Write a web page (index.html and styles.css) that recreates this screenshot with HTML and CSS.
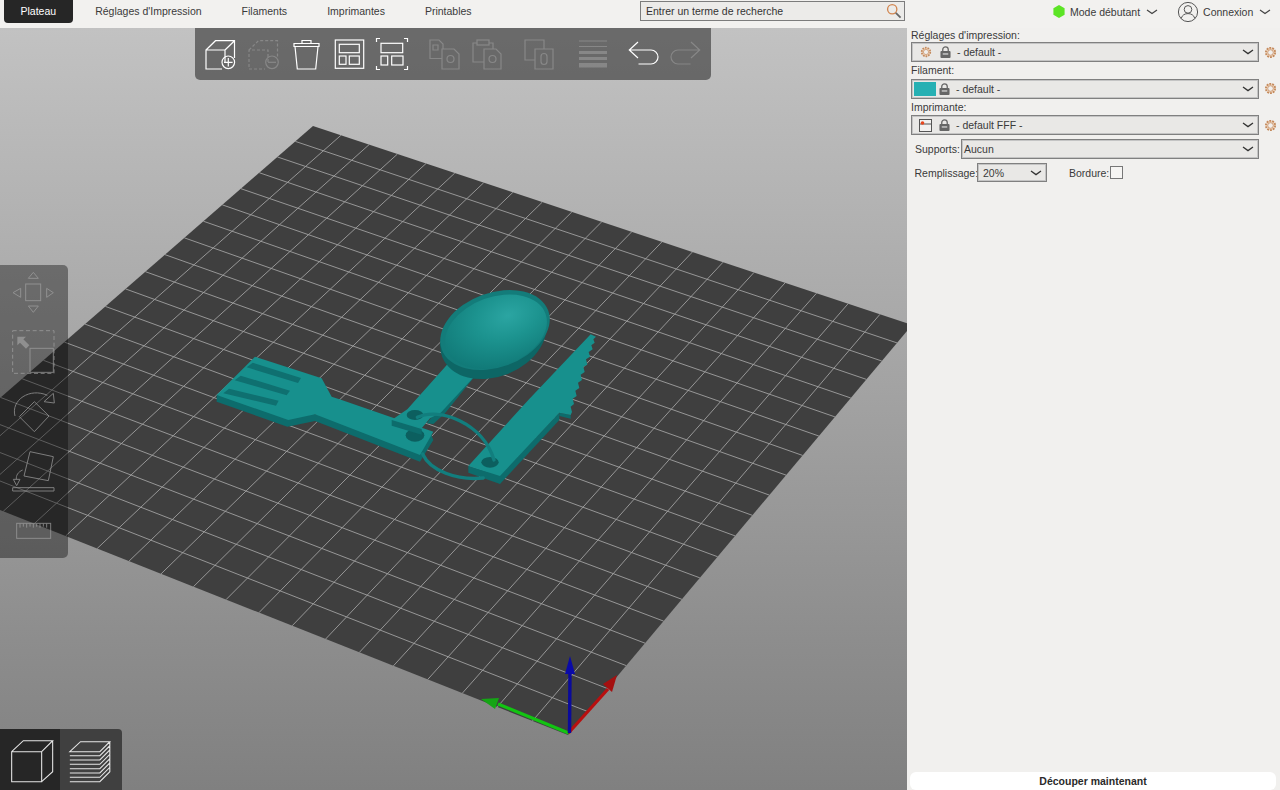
FILE: index.html
```html
<!DOCTYPE html>
<html lang="fr">
<head>
<meta charset="utf-8">
<title>Plateau</title>
<link rel="stylesheet" href="styles.css">
</head>
<body>
<header class="topbar">
  <nav class="tabs">
    <span class="tab active">Plateau</span>
    <span class="tab">Réglages d'Impression</span>
    <span class="tab">Filaments</span>
    <span class="tab">Imprimantes</span>
    <span class="tab">Printables</span>
  </nav>
  <div class="search">
    <span>Entrer un terme de recherche</span>
    <svg class="search-icon" viewBox="0 0 18 18"><circle cx="7" cy="7" r="5.2" fill="none" stroke="#d2854f" stroke-width="1.5"/><path d="M11 11l5.4 5.4" stroke="#666" stroke-width="2"/></svg>
  </div>
  <div class="mode">
    <svg class="hex" viewBox="0 0 12 13"><path d="M6 0l5.6 3.2v6.6L6 13 .4 9.8V3.2z" fill="#5ce425"/></svg>
    <span>Mode débutant</span>
    <svg class="chev-top" viewBox="0 0 12 6"><path d="M1 1l5 3.6L11 1" fill="none" stroke="#444" stroke-width="1.2"/></svg>
  </div>
  <div class="account">
    <svg class="user" viewBox="0 0 22 22"><circle cx="11" cy="11" r="9.6" fill="none" stroke="#555" stroke-width="1"/><circle cx="11" cy="8.4" r="3.8" fill="none" stroke="#555" stroke-width="1"/><path d="M4.2 17.4c1-3.4 3.6-4.8 6.8-4.8s5.8 1.4 6.8 4.8" fill="none" stroke="#555" stroke-width="1"/></svg>
    <span>Connexion</span>
    <svg class="chev-top" viewBox="0 0 12 6"><path d="M1 1l5 3.6L11 1" fill="none" stroke="#444" stroke-width="1.2"/></svg>
  </div>
</header>

<main class="workspace">
  <section class="viewport">
    <svg class="scene" viewBox="0 28 907 762">
      <defs>
        <radialGradient id="bowl" cx=".66" cy=".34" r=".72">
          <stop offset="0" stop-color="#2ba5a2"/>
          <stop offset=".45" stop-color="#1c938f"/>
          <stop offset="1" stop-color="#117a78"/>
        </radialGradient>
      </defs>
      <polygon class="bed" points="313,126 912,325 568,735 -88.5,475"/>
      <g id="grid" class="grid"></g>

      <g transform="translate(200 280) scale(.33333)">
        <!-- fork -->
        <polygon class="m-side" points="50,345 50,365 262,440 345,423 660,545 700,480 690,455 345,403"/>
        <polygon class="m-top" points="165,230 365,295 395,350 425,360 700,455 660,525 345,403 265,420 50,345"/>
        <polygon class="m-slot" points="158,248 303,294 294,309 140,262"/>
        <polygon class="m-slot" points="122,287 270,332 260,346 104,301"/>
        <polygon class="m-slot" points="87,326 236,362 228,377 70,340"/>
        <ellipse class="m-hole" cx="645" cy="466" rx="28" ry="19"/>
        <!-- spoon -->
        <polygon class="m-side" points="830,282 735,400 700,432 680,430 810,270"/>
        <polygon class="m-top" points="745,250 830,282 722,398 690,415 665,445 575,420 622,388"/>
        <polygon class="m-side" points="575,420 665,447 665,464 575,437"/>
        <ellipse class="m-hole" cx="645" cy="405" rx="25" ry="15"/>
        <ellipse cx="880" cy="170" rx="165" ry="120" transform="rotate(-22 880 170)" fill="#0d6665"/>
        <ellipse cx="885" cy="150" rx="170" ry="112" transform="rotate(-20 885 150)" fill="#137c7a"/>
        <ellipse cx="888" cy="155" rx="158" ry="104" transform="rotate(-20 888 155)" fill="url(#bowl)"/>
        <!-- knife -->
        <polygon class="m-side" points="895,592 900,612 1078,420 1078,398 900,585"/>
        <polygon class="m-side" points="805,558 805,578 900,612 900,585"/>
        <polygon class="m-side" points="1078,398 1078,408 1112,416 1112,405"/>
        <polygon class="m-top" points="1172,163 1188,170 1180,178 1184,188 1174,196 1178,208 1166,216 1170,230 1158,238 1162,254 1150,260 1154,276 1142,284 1146,300 1134,308 1138,324 1126,332 1130,348 1118,356 1122,372 1112,380 1116,396 1112,405 1078,398 900,588 805,558 985,360"/>
        <ellipse class="m-hole" cx="870" cy="547" rx="26" ry="16"/>
        <!-- ring -->
        <path class="m-ring" d="M652 412C720 380 850 430 882 540"/>
        <path class="m-ring" d="M668 522C690 572 770 602 850 594"/>
      </g>

      <!-- axes -->
      <path d="M568.5 733L498 704" stroke="#12c412" stroke-width="3.2"/>
      <polygon points="481,699 499,698 495,709" fill="#15a515"/>
      <path d="M568.5 733L608 689" stroke="#b80f0f" stroke-width="3.2"/>
      <polygon points="617,675 612,692 603,684" fill="#a51010"/>
      <path d="M569.5 733L570 672" stroke="#0a0a9c" stroke-width="3.4"/>
      <polygon points="570,656 575,674 565,674" fill="#0a0aa8"/>
    </svg>

    <div class="toolbar">
      <svg class="tool" viewBox="0 0 32 32"><path d="M21 24.5V12H2v19h16M2 12l9.5-9.3h19v17.3M21 12l9.5-9.3"/><circle cx="24.3" cy="24.3" r="6.3"/><path d="M24.3 20v8.6M20 24.3h8.6"/></svg>
      <svg class="tool faint" viewBox="0 0 32 32"><path class="dash" d="M21 24V12H2v19h16M2 12l9.5-9.3h19v17"/><circle cx="25" cy="24.3" r="6.3"/><path d="M21 24.3h8"/></svg>
      <svg class="tool" viewBox="0 0 32 32"><path d="M4 5.5h25v3H4zM12 5.5V2.500h9v3M5 8.500L7.300 31h18.400L28 8.500"/></svg>
      <svg class="tool" viewBox="0 0 32 32"><rect x="2.3" y="2" width="28.4" height="28.3"/><rect x="6.3" y="6.3" width="20" height="8.4"/><rect x="6.3" y="18" width="6.7" height="8.3"/><rect x="16.3" y="18" width="10" height="8.3"/></svg>
      <svg class="tool" viewBox="0 0 32 32"><path d="M.5 4V.5h3.500M28 .5h3.500V4M.5 28v3.500h3.500M28 31.500h3.500V28"/><rect x="5" y="5.3" width="21.7" height="9.4"/><rect x="5" y="18" width="6.7" height="9"/><rect x="15.7" y="18" width="11.3" height="9"/></svg>
      <svg class="tool faint sep" viewBox="0 0 32 32"><path d="M14 20.5H2V2h9l4 4v5M5 7h5v5H5z"/><path d="M14 11h12l5 5v15H14z"/><circle cx="22.5" cy="21" r="3.5"/></svg>
      <svg class="tool faint" viewBox="0 0 32 32"><path d="M13 24H2V5h4M18 5h4v6"/><rect x="6" y="2" width="12" height="5"/><path d="M13 11h12l5 5v15H13z"/><circle cx="21.5" cy="21" r="3.5"/></svg>
      <svg class="tool faint sep" viewBox="0 0 32 32"><path d="M12 22H2V2h19v9"/><path d="M12 11h18v20H12z"/><rect x="18" y="15.5" width="6" height="11" rx="3"/></svg>
      <svg class="tool faint sep-wide" viewBox="0 0 32 32"><path d="M3 3h28M3 8.5h28"/><rect class="fill" x="3" y="13" width="28" height="3"/><rect class="fill" x="3" y="19" width="28" height="3"/><rect class="fill" x="3" y="25" width="28" height="4.5"/></svg>
      <svg class="tool sep-narrow" viewBox="0 0 32 32"><path d="M2.3 12H24A7 7 0 0 1 24 26H11.500M11 4L2.300 12 11 20"/></svg>
      <svg class="tool faint" viewBox="0 0 32 32"><path d="M29.7 12H8A7 7 0 0 0 8 26H20.500M21 4L29.700 12 21 20"/></svg>
    </div>

    <div class="gizmos">
      <svg class="gizmo g46" viewBox="0 30 204 138"><rect x="77" y="72" width="45" height="50"/><path d="M85 55h30L100 37zM62 85v27L39 98zM140 85v27l20-14zM85 138h30l-15 19z"/></svg>
      <svg class="gizmo g50" viewBox="0 201 204 150"><path class="dash2" d="M38 212h124v128H38z"/><rect x="90" y="265" width="70" height="72"/><path class="solidfill" d="M52 230h26l-8 8 18 18-10 10-18-18-8 8z"/></svg>
      <svg class="gizmo g49" viewBox="0 384 204 147"><path d="M45 468C32 420 90 382 142 406"/><path d="M160 400l-28 25 31 4zM103 425l44 43-44 47-45-45z"/></svg>
      <svg class="gizmo g50" viewBox="0 564 204 150"><path d="M90 575l70 15-15 72-73-14zM38 683h124v10H38zM68 630c-14 6-20 16-19 28"/><path d="M40 658h20l-10 19z"/></svg>
      <svg class="gizmo g36" viewBox="0 747 204 108"><rect x="50" y="790" width="102" height="45"/><path d="M60 790v13M70 790v10M80 790v13M90 790v10M100 790v13M110 790v10M120 790v13M130 790v10M140 790v13"/></svg>
    </div>

    <div class="views">
      <div class="view view-active">
        <svg viewBox="0 237 180 183"><path d="M35 305h90v90H35zM35 305l35-33h88l-33 33M158 272v93l-33 30"/></svg>
      </div>
      <div class="view">
        <svg viewBox="180 237 183 183"><path d="M208 305l32-30h88l-30 30zM328 275v12l-30 30H208M328 287v13l-30 30H208M328 300v13l-30 30H208M328 313v13l-30 30H208M328 326v13l-30 30H208M328 339v13l-30 30H208M328 352v13l-30 30H208"/></svg>
      </div>
    </div>
  </section>

  <aside class="sidebar">
    <div class="field-label first">Réglages d'impression:</div>
    <div class="row">
      <div class="select">
        <svg class="gear small" viewBox="0 0 14 14"><circle cx="7" cy="7" r="5"/><circle cx="7" cy="7" r="3" class="gear-in"/></svg>
        <svg class="lock" viewBox="0 0 12 13"><path d="M3 6V3.8a3 3 0 016 0V6" fill="none" stroke="#666" stroke-width="1.4"/><rect x=".5" y="5.5" width="11" height="7.5" rx="1" fill="#666"/><rect x="3" y="8" width="6" height="1.3" fill="#ddd"/></svg>
        <span class="value">- default -</span>
        <svg class="chev" viewBox="0 0 12 6"><path d="M1 1l5 3.6L11 1" fill="none" stroke="#333" stroke-width="1.3"/></svg>
      </div>
      <svg class="gear" viewBox="0 0 14 14"><circle cx="7" cy="7" r="5"/><circle cx="7" cy="7" r="3" class="gear-in"/></svg>
    </div>
    <div class="field-label">Filament:</div>
    <div class="row">
      <div class="select swatched">
        <span class="swatch"></span>
        <svg class="lock" viewBox="0 0 12 13"><path d="M3 6V3.8a3 3 0 016 0V6" fill="none" stroke="#666" stroke-width="1.4"/><rect x=".5" y="5.5" width="11" height="7.5" rx="1" fill="#666"/><rect x="3" y="8" width="6" height="1.3" fill="#ddd"/></svg>
        <span class="value">- default -</span>
        <svg class="chev" viewBox="0 0 12 6"><path d="M1 1l5 3.6L11 1" fill="none" stroke="#333" stroke-width="1.3"/></svg>
      </div>
      <svg class="gear" viewBox="0 0 14 14"><circle cx="7" cy="7" r="5"/><circle cx="7" cy="7" r="3" class="gear-in"/></svg>
    </div>
    <div class="field-label">Imprimante:</div>
    <div class="row">
      <div class="select">
        <svg class="printer" viewBox="0 0 13 13"><rect x=".5" y=".5" width="12" height="12" fill="#f2f1ef" stroke="#555"/><path d="M.5 5h12" stroke="#555"/><circle cx="3.5" cy="4" r="1.8" fill="#e8451c"/></svg>
        <svg class="lock" viewBox="0 0 12 13"><path d="M3 6V3.8a3 3 0 016 0V6" fill="none" stroke="#666" stroke-width="1.4"/><rect x=".5" y="5.5" width="11" height="7.5" rx="1" fill="#666"/><rect x="3" y="8" width="6" height="1.3" fill="#ddd"/></svg>
        <span class="value">- default FFF -</span>
        <svg class="chev" viewBox="0 0 12 6"><path d="M1 1l5 3.6L11 1" fill="none" stroke="#333" stroke-width="1.3"/></svg>
      </div>
      <svg class="gear" viewBox="0 0 14 14"><circle cx="7" cy="7" r="5"/><circle cx="7" cy="7" r="3" class="gear-in"/></svg>
    </div>
    <div class="row supports">
      <span class="inline-label">Supports:</span>
      <div class="select plain">
        <span class="value">Aucun</span>
        <svg class="chev" viewBox="0 0 12 6"><path d="M1 1l5 3.6L11 1" fill="none" stroke="#333" stroke-width="1.3"/></svg>
      </div>
    </div>
    <div class="row infill">
      <span class="inline-label">Remplissage:</span>
      <div class="select plain short">
        <span class="value">20%</span>
        <svg class="chev" viewBox="0 0 12 6"><path d="M1 1l5 3.6L11 1" fill="none" stroke="#333" stroke-width="1.3"/></svg>
      </div>
      <span class="inline-label brim">Bordure:</span>
      <span class="checkbox"></span>
    </div>
    <button class="slice">Découper maintenant</button>
  </aside>
</main>
<script src="script.js"></script>
</body>
</html>
```
FILE: styles.css
```css
* { box-sizing: border-box; }
html, body { margin: 0; height: 100%; }
body {
  width: 1280px;
  height: 790px;
  overflow: hidden;
  display: flex;
  flex-direction: column;
  background: #f1f0ee;
  color: #3a3a3a;
  font-family: "Liberation Sans", Arial, sans-serif;
  font-size: 10.5px;
}

/* top bar */
.topbar {
  height: 28px;
  flex: none;
  display: flex;
  align-items: flex-start;
  background: #f2f1ef;
}
.tabs { display: flex; width: 491px; padding-left: 4px; flex: none; }
.tab {
  height: 23px;
  line-height: 23px;
  padding: 0 20px;
  white-space: nowrap;
  flex: none;
}
.tab.active {
  background: #262626;
  color: #fff;
  border-radius: 0 0 4px 4px;
  padding: 0 16.5px;
  margin-right: 2.5px;
}
.search {
  margin-left: 149px;
  margin-top: 1px;
  width: 265px;
  height: 20px;
  flex: none;
  display: flex;
  align-items: center;
  justify-content: space-between;
  padding: 0 2px 0 5px;
  background: #ecebe9;
  border: 1px solid #7c7c7c;
  color: #333;
}
.search-icon { width: 16px; height: 16px; }
.mode {
  display: flex;
  align-items: center;
  height: 23px;
  margin-left: 148px;
}
.hex { width: 12px; height: 13px; margin-right: 5px; }
.chev-top { width: 12px; height: 6px; margin-left: 6px; }
.account {
  display: flex;
  align-items: center;
  height: 23px;
  margin-left: 19px;
}
.user { width: 22px; height: 22px; margin-right: 4px; }

/* workspace */
.workspace { flex: 1; display: flex; min-height: 0; }
.viewport {
  position: relative;
  width: 907px;
  flex: none;
  overflow: hidden;
  background: linear-gradient(#c2c2c2, #808080);
}
.scene { position: absolute; inset: 0; width: 907px; height: 762px; filter: blur(.35px); }
.bed { fill: #3f3f3f; }
.grid line { stroke: #a0a0a0; stroke-width: .9; }
.m-top { fill: #17908d; }
.m-side { fill: #0d6c6c; }
.m-slot { fill: #0f7070; }
.m-hole { fill: #0c5f5f; }
.m-ring { fill: none; stroke: #127e7e; stroke-width: 10; stroke-linecap: round; }

.toolbar {
  position: absolute;
  left: 195px;
  top: 0;
  width: 516px;
  height: 52px;
  padding: 10px 0 0 9px;
  display: flex;
  gap: 11px;
  background: rgba(0, 0, 0, .45);
  border-radius: 0 0 5px 5px;
}
.tool { width: 32px; height: 32px; flex: none; fill: none; stroke: #fff; stroke-width: 1.2; overflow: visible; }
.tool.faint { opacity: .2; }
.tool .dash { stroke-dasharray: 3 2; }
.tool .fill { fill: #fff; stroke: none; }
.sep { margin-left: 9px; }
.sep-wide { margin-left: 10px; }
.sep-narrow { margin-left: 8px; }

.gizmos {
  position: absolute;
  left: 0;
  top: 237px;
  width: 68px;
  height: 293px;
  padding-top: 5px;
  display: flex;
  flex-direction: column;
  gap: 11px;
  background: rgba(0, 0, 0, .38);
  border-radius: 0 5px 5px 0;
}
.gizmo { width: 68px; flex: none; fill: none; stroke: #9f9f9f; stroke-width: 3; opacity: .72; }
.g46 { height: 46px; }
.g50 { height: 50px; }
.g49 { height: 49px; }
.g36 { height: 36px; }
.dash2 { stroke-dasharray: 12 8; }
.solidfill { fill: #9f9f9f; stroke: none; }

.views {
  position: absolute;
  left: 0;
  bottom: 0;
  display: flex;
}
.view { width: 62px; height: 61px; background: #404040; border-radius: 0 4px 0 0; }
.view-active { width: 60px; background: #262626; border-radius: 0; }
.view svg { display: block; width: 100%; height: 100%; fill: none; stroke: #e6e6e6; stroke-width: 3.2; }

/* sidebar */
.sidebar {
  position: relative;
  flex: 1;
  display: flex;
  flex-direction: column;
  padding: 0 0 0 4px;
  background: #f1f0ee;
}
.field-label { height: 16.5px; line-height: 16.5px; }
.field-label.first { height: 14.3px; line-height: 14.3px; }
.row { display: flex; align-items: center; height: 20px; }
.select {
  display: flex;
  align-items: center;
  width: 348px;
  height: 100%;
  padding: 0 4px 0 8px;
  flex: none;
  background: #e9e8e6;
  border: 1px solid #808080;
  box-shadow: inset 0 0 0 1px #c4c4c4;
}
.swatched { padding-left: 2px; }
.plain { padding-left: 2px; }
.value { flex: 1; }
.chev { width: 12px; height: 6px; flex: none; }
.gear { width: 13px; height: 13px; margin-left: 5px; flex: none; fill: #efd5bd; stroke: #c48a5d; stroke-width: 2; stroke-dasharray: 2 1.1; }
.gear-in { fill: #f1efed; stroke: #c48a5d; stroke-width: .8; stroke-dasharray: none; }
.gear.small { margin: 0 8px 0 0; width: 12px; height: 12px; }
.printer { width: 13px; height: 13px; margin: 0 7px 0 -1px; flex: none; }
.lock { width: 11px; height: 12px; margin-right: 6px; flex: none; }
.swatch { width: 22px; height: 14px; background: #26b0b3; margin-right: 3px; flex: none; }
.supports { margin-top: 4px; height: 19.4px; padding-left: 4px; }
.inline-label { flex: none; }
.supports .inline-label { width: 46px; }
.supports .select { width: 298px; }
.infill { margin-top: 4.4px; height: 19.4px; padding-left: 3.5px; }
.infill .inline-label { width: 62.5px; white-space: nowrap; }
.short { width: 70px; padding-left: 5px; }
.infill .brim { width: 41px; margin-left: 22px; }
.checkbox { width: 13px; height: 13px; background: #f6f5f3; border: 1px solid #777; }
.slice {
  position: absolute;
  left: 3px;
  bottom: 0;
  width: 366px;
  height: 18px;
  border: 0;
  border-radius: 6px;
  background: #fff;
  color: #2a2a2a;
  font: bold 10.5px "Liberation Sans", Arial, sans-serif;
}
```
FILE: script.js
```js
// Bed grid: 20 x 20 cells projected through the camera homography.
(function () {
  var p = [[313, 126], [912, 325], [568, 735], [-88.5, 475]];
  var x0 = p[0][0], y0 = p[0][1], x1 = p[1][0], y1 = p[1][1];
  var x2 = p[2][0], y2 = p[2][1], x3 = p[3][0], y3 = p[3][1];
  var dx1 = x1 - x2, dx2 = x3 - x2, sx = x0 - x1 + x2 - x3;
  var dy1 = y1 - y2, dy2 = y3 - y2, sy = y0 - y1 + y2 - y3;
  var det = dx1 * dy2 - dx2 * dy1;
  var g = (sx * dy2 - dx2 * sy) / det, h = (dx1 * sy - sx * dy1) / det;
  var a = x1 - x0 + g * x1, b = x3 - x0 + h * x3, d = y1 - y0 + g * y1, e = y3 - y0 + h * y3;
  function map(u, v) {
    var w = g * u + h * v + 1;
    return [(a * u + b * v + x0) / w, (d * u + e * v + y0) / w];
  }
  var root = document.getElementById('grid'), ns = 'http://www.w3.org/2000/svg', n = 20;
  function add(s, t) {
    var l = document.createElementNS(ns, 'line');
    l.setAttribute('x1', s[0]); l.setAttribute('y1', s[1]);
    l.setAttribute('x2', t[0]); l.setAttribute('y2', t[1]);
    root.appendChild(l);
  }
  for (var i = 1; i < n; i++) {
    add(map(i / n, 0), map(i / n, 1));
    add(map(0, i / n), map(1, i / n));
  }
})();
```
